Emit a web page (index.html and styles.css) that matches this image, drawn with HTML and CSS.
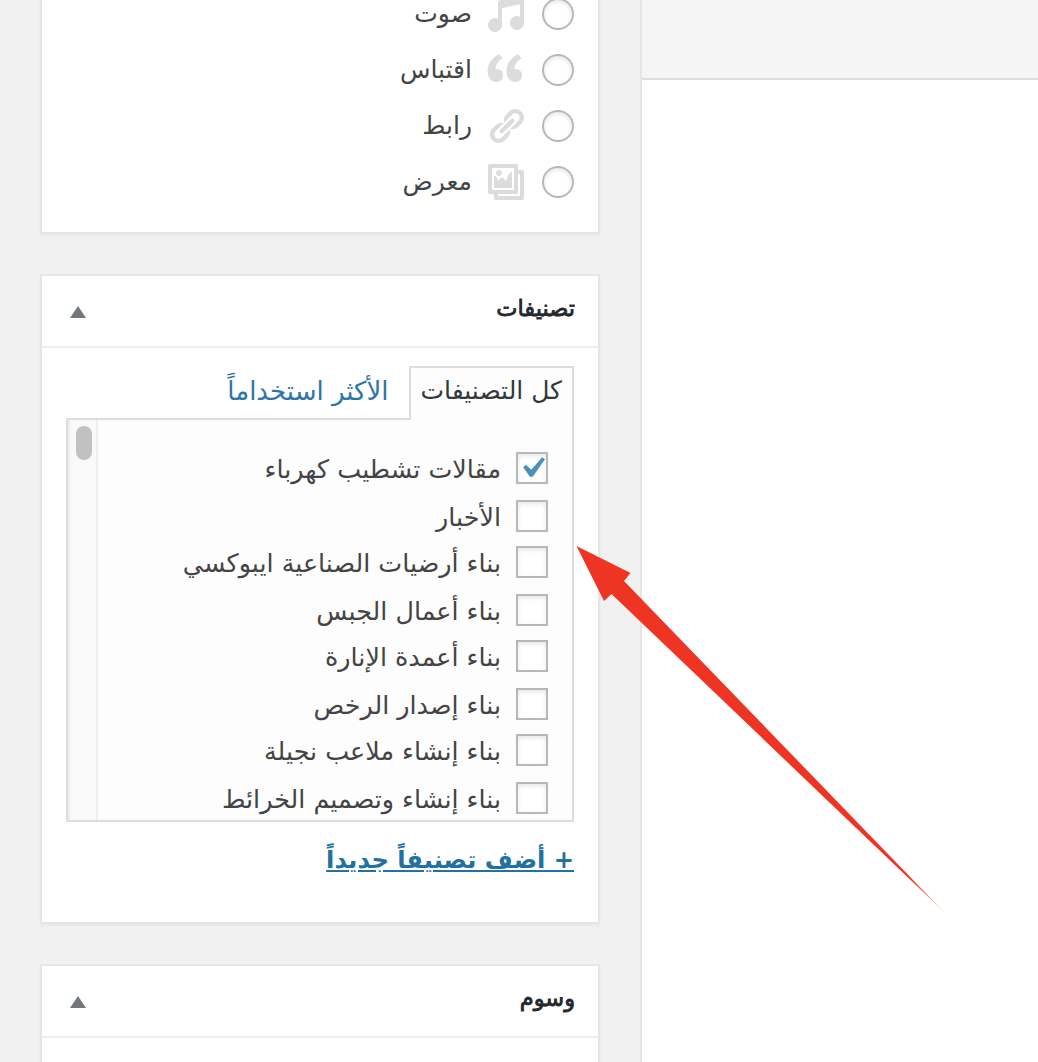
FILE: index.html
```html
<!DOCTYPE html>
<html lang="ar">
<head>
<meta charset="utf-8">
<title>تصنيفات</title>
<link rel="stylesheet" href="styles.css">
</head>
<body>
<div class="page">
  <aside class="sidebar">
    <section class="card format-card">
      <div class="format-row"><span class="radio"></span><svg class="format-icon" viewBox="0 0 20 20"><path d="M6.99 3.08l11.02-2c.55-.08.99.45.99 1V14.5c0 1.94-1.57 3.5-3.5 3.5S12 16.44 12 14.5c0-1.93 1.57-3.5 3.5-3.5.54 0 1.04.14 1.5.35V5.08l-9 2V16c-.24 1.7-1.74 3-3.5 3C2.57 19 1 17.44 1 15.5 1 13.57 2.57 12 4.5 12c.54 0 1.04.14 1.5.35V4.08c0-.55.44-.91.99-1z"/></svg><span class="format-label">صوت</span></div>
      <div class="format-row"><span class="radio"></span><svg class="format-icon" viewBox="0 0 20 20"><path d="M8.54 12.74c0-.87-.24-1.61-.72-2.22-.73-.92-2.14-1.03-2.96-.85-.34-1.93 1.3-4.39 3.42-5.45L6.65 1.94C3.45 3.46.31 6.96.85 11.37 1.19 14.16 2.8 16 5.08 16c1 0 1.83-.29 2.48-.88.66-.59.98-1.38.98-2.38zm9.43 0c0-.87-.24-1.61-.72-2.22-.73-.93-2.14-1.03-2.96-.85-.34-1.93 1.3-4.39 3.42-5.45l-1.63-2.28c-3.2 1.52-6.34 5.02-5.8 9.43.34 2.79 1.95 4.63 4.23 4.63 1 0 1.83-.29 2.48-.88.66-.59.98-1.38.98-2.38z"/></svg><span class="format-label">اقتباس</span></div>
      <div class="format-row"><span class="radio"></span><svg class="format-icon" viewBox="0 0 20 20"><path d="M17.74 2.76c1.68 1.69 1.68 4.41 0 6.1l-1.53 1.52c-1.12 1.12-2.7 1.47-4.14 1.09l2.62-2.61.76-.77.76-.76c.84-.84.84-2.2 0-3.04-.84-.85-2.2-.85-3.04 0l-.77.76-3.38 3.38c-.37-1.44-.02-3.02 1.1-4.14l1.52-1.53c1.69-1.68 4.42-1.68 6.1 0zM8.59 13.43l5.34-5.34c.42-.42.42-1.1 0-1.52-.44-.43-1.13-.39-1.53 0l-5.33 5.34c-.42.42-.42 1.1 0 1.52.44.43 1.13.39 1.52 0zm-.76 2.29l4.14-4.15c.38 1.44.03 3.02-1.09 4.14l-1.52 1.53c-1.69 1.68-4.41 1.68-6.1 0-1.68-1.68-1.68-4.42 0-6.1l1.53-1.52c1.12-1.12 2.7-1.47 4.14-1.1l-4.14 4.15c-.85.84-.85 2.2 0 3.05.84.84 2.2.84 3.04 0z"/></svg><span class="format-label">رابط</span></div>
      <div class="format-row"><span class="radio"></span><svg class="format-icon" viewBox="0 0 20 20"><path d="M16 4h1.96c.57 0 1.04.47 1.04 1.04v12.92c0 .57-.47 1.04-1.04 1.04H5.04C4.47 19 4 18.53 4 17.96V16H2.04C1.47 16 1 15.53 1 14.96V2.04C1 1.47 1.47 1 2.04 1h12.92c.57 0 1.04.47 1.04 1.04V4zM3 14h11V3H3v11zm5-8.5C8 4.67 7.33 4 6.5 4S5 4.67 5 5.5 5.67 7 6.5 7 8 6.33 8 5.5zm2 4.5s1-5 3-5v8H4V7c2 0 2 3 2 3s.33-2 2-2 2 2 2 2zm7 7V6h-1v8.96c0 .57-.47 1.04-1.04 1.04H6v1h11z"/></svg><span class="format-label">معرض</span></div>
    </section>

    <section class="card">
      <header class="card-head"><h2 class="card-title">تصنيفات</h2><span class="toggle"></span></header>
      <div class="cat-body">
        <nav class="tabs">
          <span class="tab tab-active">كل التصنيفات</span>
          <a class="tab-link">الأكثر استخداماً</a>
        </nav>
        <div class="cat-panel">
          <ul class="cat-list">
            <li class="cat-row"><span class="checkbox"><svg class="check" viewBox="0 0 20 20"><path d="M14.83 4.89l1.34.94-5.81 8.38H9.02L5.78 9.67l1.34-1.25 2.57 2.4z"/></svg></span><span class="cat-name">مقالات تشطيب كهرباء</span></li>
            <li class="cat-row"><span class="checkbox"></span><span class="cat-name">الأخبار</span></li>
            <li class="cat-row"><span class="checkbox"></span><span class="cat-name">بناء أرضيات الصناعية ايبوكسي</span></li>
            <li class="cat-row"><span class="checkbox"></span><span class="cat-name">بناء أعمال الجبس</span></li>
            <li class="cat-row"><span class="checkbox"></span><span class="cat-name">بناء أعمدة الإنارة</span></li>
            <li class="cat-row"><span class="checkbox"></span><span class="cat-name">بناء إصدار الرخص</span></li>
            <li class="cat-row"><span class="checkbox"></span><span class="cat-name">بناء إنشاء ملاعب نجيلة</span></li>
            <li class="cat-row"><span class="checkbox"></span><span class="cat-name">بناء إنشاء وتصميم الخرائط</span></li>
          </ul>
          <div class="scrollbar"><span class="thumb"></span></div>
        </div>
        <a class="add-link">+ أضف تصنيفاً جديداً</a>
      </div>
    </section>

    <section class="card">
      <header class="card-head"><h2 class="card-title">وسوم</h2><span class="toggle"></span></header>
      <div class="tags-body"></div>
    </section>
  </aside>
  <main class="main">
    <div class="main-top"></div>
  </main>
</div>
<svg class="arrow" viewBox="0 0 1038 1062">
  <defs>
    <linearGradient id="arrowFill" gradientUnits="userSpaceOnUse" x1="576" y1="546" x2="945" y2="913">
      <stop offset="0.9" stop-color="#ee3524"/>
      <stop offset="1" stop-color="#ee3524" stop-opacity="0.25"/>
    </linearGradient>
  </defs>
  <polygon fill="url(#arrowFill)" points="576.5,546 630.5,573 624,581 945,913 611.5,594 604,601"/>
</svg>
</body>
</html>
```

FILE: styles.css
```css
* { box-sizing: border-box; }

html, body {
  margin: 0;
  height: 1062px;
  overflow: hidden;
}

body {
  position: relative;
  background: #f1f1f1;
  color: #444;
  font-family: "DejaVu Sans", sans-serif;
  font-size: 26px;
}

.page {
  display: flex;
  height: 1062px;
  padding-left: 40px;
  gap: 40px;
}

.sidebar {
  display: flex;
  flex: 0 0 560px;
  flex-direction: column;
  gap: 40px;
  margin-top: -16px;
}

.main {
  flex: 1;
  background: #fff;
  border-left: 2px solid #e5e5e5;
}

.main-top {
  height: 80px;
  background: #f5f5f5;
  border-bottom: 2px solid #ddd;
}

.card {
  direction: rtl;
  background: #fff;
  border: 2px solid #e5e5e5;
  box-shadow: 0 2px 2px rgba(0, 0, 0, 0.04);
}

.format-card { padding: 0 24px 22px; }

.format-row {
  display: flex;
  align-items: center;
  height: 56px;
}

.radio {
  flex: none;
  width: 32px;
  height: 32px;
  border: 2px solid #b4b9be;
  border-radius: 50%;
  background: #fff;
  box-shadow: inset 0 2px 4px rgba(0, 0, 0, 0.1);
}

.format-icon {
  flex: none;
  width: 40px;
  height: 40px;
  margin: 0 16px 0 14px;
  fill: #dcdcdc;
}

.format-label {
  margin-top: -2px;
  font-size: 25px;
  line-height: 1;
}

.card-head {
  display: flex;
  align-items: center;
  justify-content: space-between;
  height: 72px;
  padding: 0 24px 0 28px;
  border-bottom: 2px solid #eee;
}

.card-title {
  margin: -6px -1px 0 0;
  color: #23282d;
  font-size: 22.5px;
  font-weight: 400;
  -webkit-text-stroke: 0.8px #23282d;
}

.toggle {
  width: 0;
  height: 0;
  margin-top: 2px;
  border-right: 8px solid transparent;
  border-left: 8px solid transparent;
  border-bottom: 12px solid #72777c;
}

.cat-body {
  padding: 18px 24px 0;
  height: 574px;
}

.tabs {
  position: relative;
  z-index: 1;
  display: flex;
  align-items: flex-start;
  height: 54px;
  margin-bottom: -2px;
}

.tab {
  height: 54px;
  padding: 0 10px;
  border: 2px solid #ddd;
  border-bottom: 0;
  background: #fdfdfd;
  color: #32373c;
  font-size: 25px;
  line-height: 46px;
  white-space: nowrap;
}

.tab-link {
  margin-right: 20px;
  color: #2f75a8;
  line-height: 50px;
  white-space: nowrap;
}

.cat-panel {
  display: flex;
  height: 404px;
  border: 2px solid #ddd;
  background: #fdfdfd;
  overflow: hidden;
}

.cat-list {
  flex: 1;
  min-width: 0;
  margin: 0;
  padding: 24px 24px 0 0;
  font-size: 25.4px;
  list-style: none;
}

.cat-row {
  display: flex;
  align-items: center;
  gap: 15px;
  height: 46px;
  padding-top: 2px;
  white-space: nowrap;
}

.cat-row:nth-child(odd) {
  height: 48px;
  padding-top: 0;
}

.cat-name { margin-top: 2px; }

.checkbox {
  display: block;
  flex: none;
  width: 32px;
  height: 32px;
  border: 2px solid #b4b9be;
  background: #fff;
  box-shadow: inset 0 2px 4px rgba(0, 0, 0, 0.1);
}

.check {
  display: block;
  width: 42px;
  height: 42px;
  margin: -7px -7px 0 0;
  fill: #4a90bd;
}

.scrollbar {
  flex: 0 0 30px;
  direction: ltr;
  padding: 6px 0 0 6px;
  background: #f9f9f9;
  border-right: 2px solid #eee;
  border-left: 2px solid #eee;
}

.thumb {
  display: block;
  width: 16px;
  height: 34px;
  border-radius: 8px;
  background: #c1c1c1;
}

.add-link {
  display: block;
  margin-top: 24px;
  color: #2271a0;
  font-size: 24.2px;
  font-weight: 700;
  text-decoration: underline;
}

.tags-body { height: 60px; }

.arrow {
  position: absolute;
  top: 0;
  left: 0;
  width: 1038px;
  height: 1062px;
  pointer-events: none;
}
```
